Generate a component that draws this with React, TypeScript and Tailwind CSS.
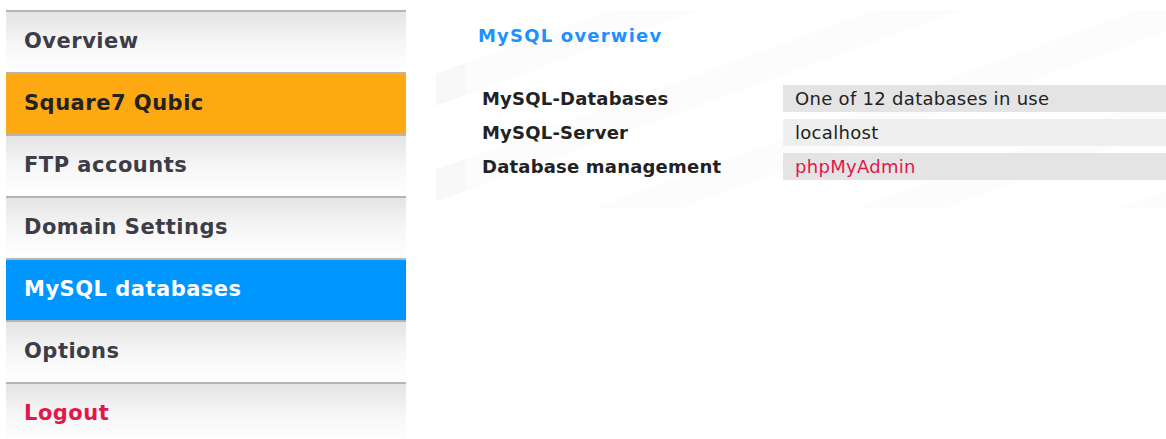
import React from 'react';

type NavItem = { label: string; tone: 'plain' | 'orange' | 'blue' | 'danger' };

const nav: NavItem[] = [
  { label: 'Overview', tone: 'plain' },
  { label: 'Square7 Qubic', tone: 'orange' },
  { label: 'FTP accounts', tone: 'plain' },
  { label: 'Domain Settings', tone: 'plain' },
  { label: 'MySQL databases', tone: 'blue' },
  { label: 'Options', tone: 'plain' },
  { label: 'Logout', tone: 'danger' },
];

const toneClass: Record<NavItem['tone'], string> = {
  plain: 'bg-gradient-to-b from-[#e4e4e4] via-[#f6f6f6] to-white text-[#3d3d47]',
  danger: 'bg-gradient-to-b from-[#e4e4e4] via-[#f6f6f6] to-white text-[#e2174b]',
  orange: 'bg-[#fea812] text-[#222]',
  blue: 'bg-[#0096ff] text-white',
};

const rows = [
  { label: 'MySQL-Databases', value: 'One of 12 databases in use', shade: 'bg-[#e4e4e4]' },
  { label: 'MySQL-Server', value: 'localhost', shade: 'bg-[#efefef]' },
  { label: 'Database management', value: 'phpMyAdmin', shade: 'bg-[#e4e4e4]', link: true },
];

export default function App() {
  return (
    <div className="flex h-[439px] w-[1166px] overflow-hidden bg-white font-['DejaVu_Sans',Verdana,sans-serif]">
      {/* Sidebar */}
      <nav className="ml-[6px] mt-[10px] flex w-[400px] shrink-0 flex-col">
        {nav.map((item) => (
          <a
            key={item.label}
            href="#"
            className={`flex h-[62px] shrink-0 items-center border-t-2 border-[#b5b5b5] pl-[18px] text-[21px] font-bold tracking-[0.5px] ${toneClass[item.tone]}`}
          >
            {item.label}
          </a>
        ))}
      </nav>

      {/* Content */}
      <main className="ml-[30px] mt-[10px] h-[198px] flex-1 bg-[repeating-linear-gradient(160deg,#ffffff_0px,#ffffff_60px,#f8f8f8_60px,#f8f8f8_90px)] pl-[30px]">
        <div className="h-full bg-white/60 pt-[12px]">
          <h1 className="pl-[12px] text-[18px] font-bold tracking-[1.2px] text-[#1e90ff]">MySQL overwiev</h1>
          <div className="mt-[36px] flex flex-col gap-[7px]">
            {rows.map((row) => (
              <div key={row.label} className="flex h-[27px] items-center">
                <div className="w-[317px] shrink-0 pl-[16px] text-[18px] font-bold tracking-[0.2px] text-[#222]">{row.label}</div>
                <div className={`flex h-full flex-1 items-center pl-[12px] text-[18px] tracking-[0.3px] ${row.shade}`}>
                  {row.link ? (
                    <a href="#" className="text-[#e2174b]">{row.value}</a>
                  ) : (
                    <span className="text-[#222]">{row.value}</span>
                  )}
                </div>
              </div>
            ))}
          </div>
        </div>
      </main>
    </div>
  );
}
